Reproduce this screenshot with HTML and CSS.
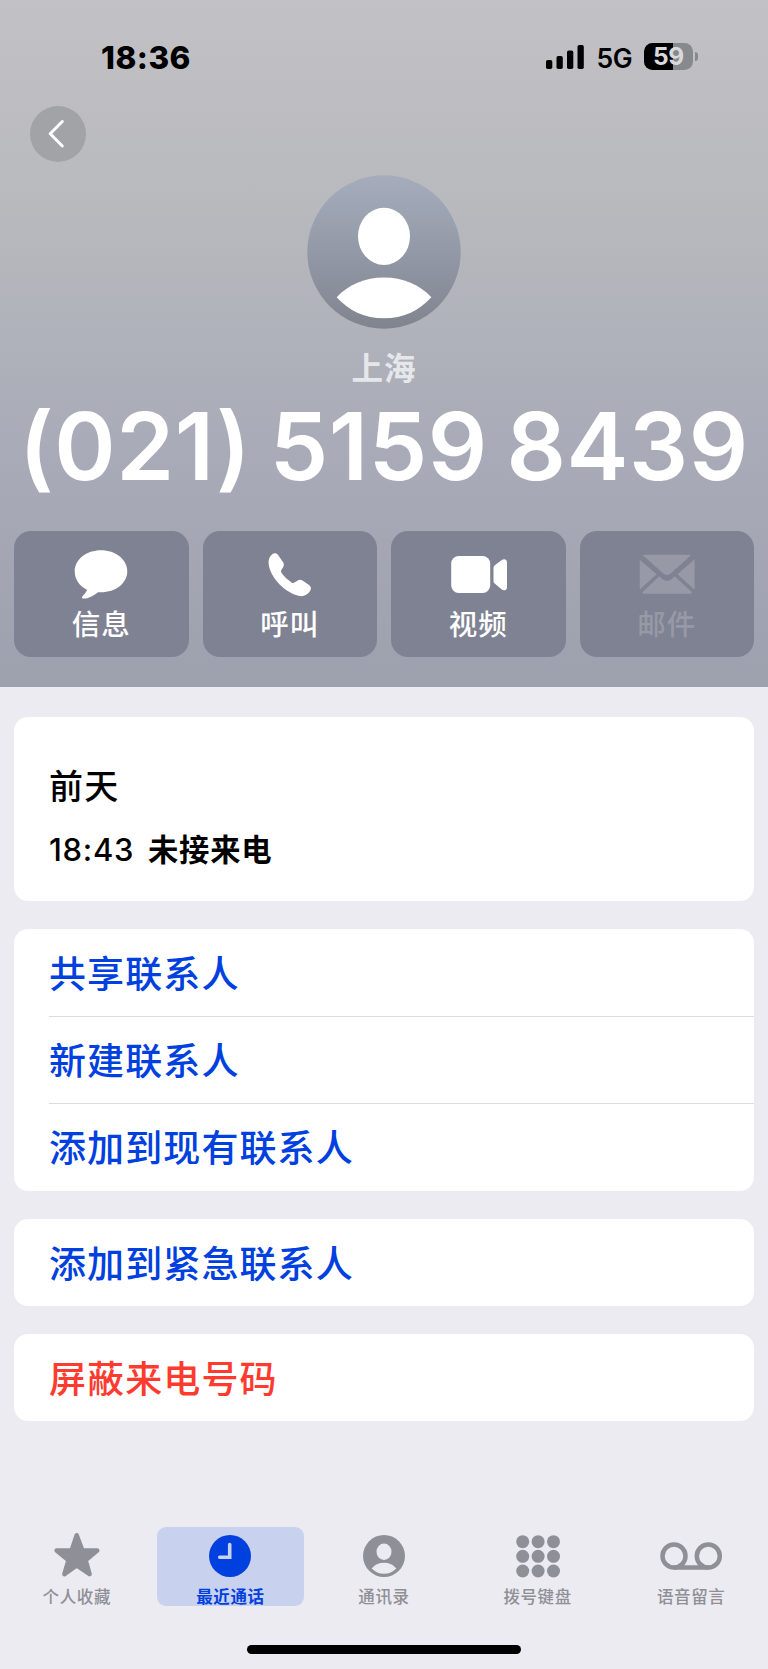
FILE: index.html
```html
<!DOCTYPE html>
<html lang="zh-CN">
<head>
<meta charset="utf-8">
<title>联系人</title>
<link rel="stylesheet" href="styles.css">
</head>
<body>
<div class="screen">
  <header class="hero">
    <div class="status">
      <span class="clock">18:36</span>
      <div class="indicators">
        <svg class="signal" width="38" height="24" viewBox="0 0 38 24"><rect x="0" y="15" width="6.3" height="9" rx="1.8"/><rect x="10.5" y="11" width="6.3" height="13" rx="1.8"/><rect x="21" y="5.5" width="6.3" height="18.500" rx="1.8"/><rect x="31.500" y="0" width="6.300" height="24" rx="1.8"/></svg>
        <span class="network">5G</span>
        <div class="battery"><span class="level">59</span></div>
        <span class="nub"></span>
      </div>
    </div>
    <nav class="nav">
      <button class="back" aria-label="返回"><svg width="56" height="56" viewBox="0 0 56 56"><path d="M32.300 15.500 20.200 27.800 32.300 40"/></svg></button>
    </nav>
    <svg class="avatar" width="154" height="154" viewBox="0 0 154 154">
      <defs><linearGradient id="av" x1="0" y1="0" x2="0" y2="1"><stop offset="0" stop-color="#a5adbd"/><stop offset="1" stop-color="#80848f"/></linearGradient></defs>
      <circle cx="77" cy="77" r="76.700" fill="url(#av)"/>
      <ellipse cx="77" cy="61.300" rx="26" ry="28.600" fill="#fff"/>
      <path d="M29.700 122.300C41 109.500 58 102.400 77 102.400s36 7.100 47.300 19.900C112 136 96 143.300 77 143.300S42 136 29.700 122.300Z" fill="#fff"/>
    </svg>
    <div class="place">上海</div>
    <h1 class="number">(021) 5159 8439</h1>
    <div class="actions">
      <div class="action">
        <svg width="58" height="56" viewBox="0 0 58 56"><path d="M29 4.300c14.600 0 26.300 9.200 26.300 21S44 46.300 29 46.300c-1 0-2-.05-3-.15C21.700 49.500 16.300 52.600 12 52.600c-2.300 0-2.600-1.400-1.300-2.700 1.700-1.700 3.600-3.700 4.300-6.200C7.600 40 2.700 33.600 2.700 25.300 2.700 13.500 14.400 4.300 29 4.300Z"/></svg>
        <span>信息</span>
      </div>
      <div class="action">
        <svg width="58" height="56" viewBox="0 0 58 56"><path transform="translate(-.3 .6) scale(.93)" d="M12.300 8.100C14.500 6.500 17 6.700 18.700 9l5.400 7.900c1.200 2 .9 3.800-.2 5.600l-1.800 3c-.6 1.100-.3 2 .4 3 3 4.100 6.500 7.300 10.600 10 1.100.7 2.100.8 3.200.1l3.600-2.200c1.700-1 3.300-1 5 .1l7.400 5.100c2 1.500 2.200 3.800.8 6.200-2.700 4-6.700 6.100-11.500 5.300C27.200 50.500 9.800 33.500 8.500 18.200c-.3-4 .7-7.700 3.800-10.100Z"/></svg>
        <span>呼叫</span>
      </div>
      <div class="action">
        <svg width="58" height="56" viewBox="0 0 58 56"><g transform="translate(1)"><rect x="1.200" y="10" width="39" height="37" rx="7.500"/><path d="M43.500 22.200c0-1.300.5-2.200 1.500-3.100l6.800-5.100c2.400-1.500 5.200-.6 5.200 2.400v24.800c0 3-2.800 3.900-5.200 2.400L45 37.800c-1-.8-1.500-1.700-1.500-3Z"/></g></svg>
        <span>视频</span>
      </div>
      <div class="action disabled">
        <svg width="58" height="56" viewBox="0 0 58 56"><path d="M5.500 8.700h46.800c.5 0 .6.400.3.700L33.200 27c-3 2.800-5.400 2.800-8.400 0L5.200 9.400c-.4-.3-.2-.7.300-.7ZM1.700 13.700 18.500 28.200 1.700 43.700ZM56.600 13.300v30.500L39.500 28.200ZM21.300 30.300l2.300 2.100c3.800 3.200 7 3.200 10.800 0l2.300-2.100L53.200 45.500c.9.900.5 2.300-.8 2.300H6c-1.300 0-1.700-1.400-.8-2.300Z"/></svg>
        <span>邮件</span>
      </div>
    </div>
  </header>

  <main class="content">
    <section class="card log">
      <h2 class="day">前天</h2>
      <div class="entry"><span class="time">18:43</span><span class="kind">未接来电</span></div>
    </section>
    <section class="card">
      <div class="row">共享联系人</div>
      <div class="row">新建联系人</div>
      <div class="row">添加到现有联系人</div>
    </section>
    <section class="card"><div class="row">添加到紧急联系人</div></section>
    <section class="card"><div class="row danger">屏蔽来电号码</div></section>
  </main>

  <footer class="tabs">
    <div class="tab">
      <svg width="64" height="56" viewBox="0 0 64 56"><path d="M31.700 8.200 37.300 23.300 52.200 23.500 40.600 33.200 44.600 47.200 31.700 38.500 19.400 47.200 23.500 33.200 11.600 23.500 26.700 23.300Z" stroke="currentColor" stroke-width="4.500" stroke-linejoin="round"/></svg>
      <span>个人收藏</span>
    </div>
    <div class="tab active">
      <svg width="64" height="56" viewBox="0 0 64 56"><circle cx="32" cy="29" r="21"/><path d="M31.700 17.500v12.700h-10" fill="none" stroke="#c8d1ee" stroke-width="3.600" stroke-linecap="round" stroke-linejoin="miter"/></svg>
      <span>最近通话</span>
    </div>
    <div class="tab">
      <svg width="64" height="56" viewBox="0 0 64 56"><circle cx="32" cy="29" r="21"/><ellipse cx="32" cy="24.700" rx="7.500" ry="8.200" fill="#ebebf1"/><path d="M19.700 41.400C22.600 37.700 27 35.800 32 35.800s9.400 1.900 12.300 5.600C41 44.800 36.800 46.700 32 46.700s-9-1.900-12.300-5.300Z" fill="#ebebf1"/></svg>
      <span>通讯录</span>
    </div>
    <div class="tab">
      <svg width="64" height="56" viewBox="0 0 64 56"><circle cx="16.700" cy="14.700" r="6.500"/><circle cx="32.100" cy="14.700" r="6.500"/><circle cx="47.500" cy="14.700" r="6.500"/><circle cx="16.700" cy="29.300" r="6.500"/><circle cx="32.100" cy="29.300" r="6.500"/><circle cx="47.500" cy="29.300" r="6.500"/><circle cx="16.700" cy="44" r="6.500"/><circle cx="32.100" cy="44" r="6.500"/><circle cx="47.500" cy="44" r="6.500"/></svg>
      <span>拨号键盘</span>
    </div>
    <div class="tab">
      <svg width="64" height="56" viewBox="0 0 64 56"><g fill="none" stroke="currentColor" stroke-width="4.500"><circle cx="15" cy="29" r="11.500"/><circle cx="49.300" cy="29" r="11.500"/><path d="M15 40.500h34.300"/></g></svg>
      <span>语音留言</span>
    </div>
  </footer>
  <div class="home"></div>
</div>
</body>
</html>
```

FILE: styles.css
```css
* { box-sizing: border-box; }
body {
  margin: 0;
  background: #ebebf1;
  font-family: Inter, "Noto Sans CJK SC", sans-serif;
  color: #000;
}
.screen { width: 768px; height: 1669px; overflow: hidden; display: flex; flex-direction: column; }
.hero {
  height: 687px;
  flex: none;
  display: flex;
  flex-direction: column;
  align-items: center;
  background: linear-gradient(#c2c2c6 0, #bebec2 90px, #b9babe 190px, #b0b3ba 320px, #a9acb8 440px, #9da0ad 687px);
}
.status {
  width: 100%;
  height: 106px;
  padding: 37px 70px 0 101px;
  display: flex;
  justify-content: space-between;
}
.clock { font-size: 31.5px; line-height: 41px; font-weight: 800; letter-spacing: 0.5px; }
.indicators { display: flex; height: 39px; align-items: center; }
.network { font-size: 26.5px; font-weight: 600; line-height: 40px; margin: 2px 12px 0 12px; letter-spacing: -0.5px; }
.signal { display: block; }
.battery {
  width: 49px;
  height: 27px;
  border-radius: 8.5px;
  background: linear-gradient(90deg, #000 29px, #88898d 29px);
  text-align: center;
}
.level { display: block; color: #d9d9dc; font-size: 24.5px; line-height: 27px; font-weight: 700; letter-spacing: -0.2px; }
.nub { width: 3px; height: 9px; margin-left: 2px; border-radius: 0 4px 4px 0; background: #88898d; }
.nav { width: 100%; height: 69px; padding-left: 30px; }
.back {
  display: block;
  width: 56px;
  height: 56px;
  padding: 0;
  border: 0;
  border-radius: 50%;
  background: #a2a3a6;
}
.back svg { display: block; fill: none; stroke: #fff; stroke-width: 3; stroke-linecap: round; stroke-linejoin: round; }
.avatar { display: block; flex: none; }
.place {
  margin-top: 17px;
  height: 45px;
  line-height: 46px;
  font-size: 31.5px;
  font-weight: 700;
  letter-spacing: 1px;
  color: #e6e7ea;
}
.number {
  margin: 0;
  height: 140px;
  line-height: 110px;
  font-size: 93px;
  font-weight: 600;
  letter-spacing: 0.6px;
  word-spacing: -5.5px;
  font-feature-settings: "calt" 0;
  color: #fff;
  white-space: nowrap;
}
.actions {
  width: 100%;
  padding: 0 14px;
  display: grid;
  grid-template-columns: repeat(4, 1fr);
  gap: 14px;
}
.action {
  height: 126px;
  padding-top: 15px;
  border-radius: 17px;
  background: #7f8292;
  color: #fff;
  font-size: 28.5px;
  font-weight: 500;
  letter-spacing: 1px;
  line-height: 45px;
  display: flex;
  flex-direction: column;
  align-items: center;
}
.action svg { display: block; flex: none; fill: currentColor; }
.disabled { color: #9799a6; }
.content {
  flex: none;
  height: 840px;
  padding: 30px 14px 0;
  display: flex;
  flex-direction: column;
  gap: 28px;
}
.card { background: #fff; border-radius: 14px; padding-left: 35px; }
.log { height: 184px; padding-top: 45px; }
.day { margin: 0; font-size: 34px; line-height: 50px; font-weight: 500; letter-spacing: 1.3px; }
.entry { display: flex; align-items: baseline; margin-top: 15px; line-height: 46px; }
.time { font-size: 31px; font-weight: 500; letter-spacing: 0.7px; width: 99px; }
.kind { font-size: 30.3px; font-weight: 700; letter-spacing: 0.8px; }
.row {
  height: 87.200px;
  line-height: 91px;
  font-size: 37px;
  font-weight: 500;
  letter-spacing: 1.100px;
  color: #0040df;
}
.row + .row { border-top: 1.500px solid #dcdcde; line-height: 90px; }
.danger { color: #ff3b30; }
.tabs { flex: none; height: 118px; display: grid; grid-template-columns: repeat(5, 1fr); justify-items: center; }
.tab {
  width: 147px;
  height: 79px;
  border-radius: 9px;
  display: flex;
  flex-direction: column;
  align-items: center;
  color: #8f8f97;
  font-size: 16.500px;
  line-height: 28px;
  letter-spacing: 0.600px;
  font-weight: 500;
}
.tab svg { display: block; flex: none; fill: currentColor; }
.active { background: #c8d1ee; color: #0040df; font-weight: 700; }
.home { flex: none; width: 274px; height: 9px; margin: 0 auto; border-radius: 5px; background: #000; }
```
